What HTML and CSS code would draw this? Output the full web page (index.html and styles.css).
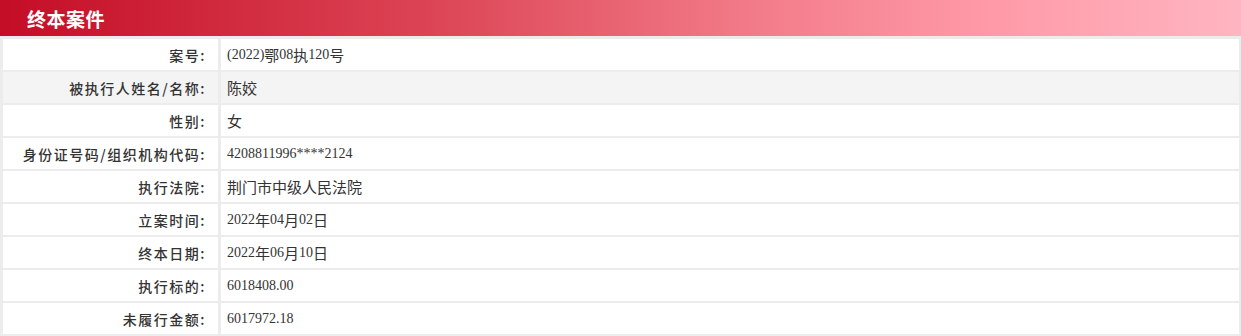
FILE: index.html
```html
<!DOCTYPE html>
<html lang="zh-CN">
<head>
<meta charset="utf-8">
<title>终本案件</title>
<link rel="stylesheet" href="styles.css">
</head>
<body>
<section class="panel">
  <header class="panel-head"><h2 class="panel-title">终本案件</h2></header>
  <div class="info-grid">
    <div class="row"><div class="label">案号:</div><div class="value">(2022)<span class="cjk">鄂</span>08<span class="cjk">执</span>120<span class="cjk">号</span></div></div>
    <div class="row alt"><div class="label">被执行人姓名/名称:</div><div class="value"><span class="cjk">陈姣</span></div></div>
    <div class="row"><div class="label">性别:</div><div class="value"><span class="cjk">女</span></div></div>
    <div class="row"><div class="label">身份证号码/组织机构代码:</div><div class="value">4208811996****2124</div></div>
    <div class="row"><div class="label">执行法院:</div><div class="value"><span class="cjk">荆门市中级人民法院</span></div></div>
    <div class="row"><div class="label">立案时间:</div><div class="value">2022<span class="cjk">年</span>04<span class="cjk">月</span>02<span class="cjk">日</span></div></div>
    <div class="row"><div class="label">终本日期:</div><div class="value">2022<span class="cjk">年</span>06<span class="cjk">月</span>10<span class="cjk">日</span></div></div>
    <div class="row"><div class="label">执行标的:</div><div class="value">6018408.00</div></div>
    <div class="row"><div class="label">未履行金额:</div><div class="value">6017972.18</div></div>
  </div>
</section>
</body>
</html>
```
FILE: styles.css
```css
html, body {
  margin: 0;
  padding: 0;
  background: #ececec;
}
.panel {
  width: 1241px;
}
.panel-head {
  height: 36px;
  background: linear-gradient(90deg, #c40d26 0%, #dc4555 35%, #f27a88 60%, #ff9aa8 80%, #ffb5c1 100%);
  display: flex;
  align-items: center;
  padding-left: 27px;
}
.panel-title {
  margin: 0;
  color: #fff;
  font-family: "Noto Sans CJK SC", sans-serif;
  font-weight: 700;
  font-size: 19px;
  letter-spacing: 0.5px;
}
.info-grid {
  display: grid;
  grid-template-columns: 215px 1018px;
  column-gap: 3px;
  row-gap: 2px;
  padding: 3px 2px 2px 3px;
}
.row {
  display: contents;
}
.label, .value {
  height: 31px;
  display: flex;
  align-items: center;
  background: #fff;
  color: #333;
}
.row.alt .label, .row.alt .value {
  background: #f4f4f4;
}
.label {
  justify-content: flex-end;
  padding-right: 12px;
  font-family: "Noto Sans CJK SC", sans-serif;
  font-size: 14px;
  font-weight: 500;
  letter-spacing: 1.5px;
}
.value {
  padding-left: 6px;
  font-family: "Liberation Serif", "Noto Sans CJK SC", serif;
  font-size: 14px;
  white-space: pre;
}
.cjk {
  font-family: "Noto Sans CJK SC", sans-serif;
  font-size: 15px;
}
```
